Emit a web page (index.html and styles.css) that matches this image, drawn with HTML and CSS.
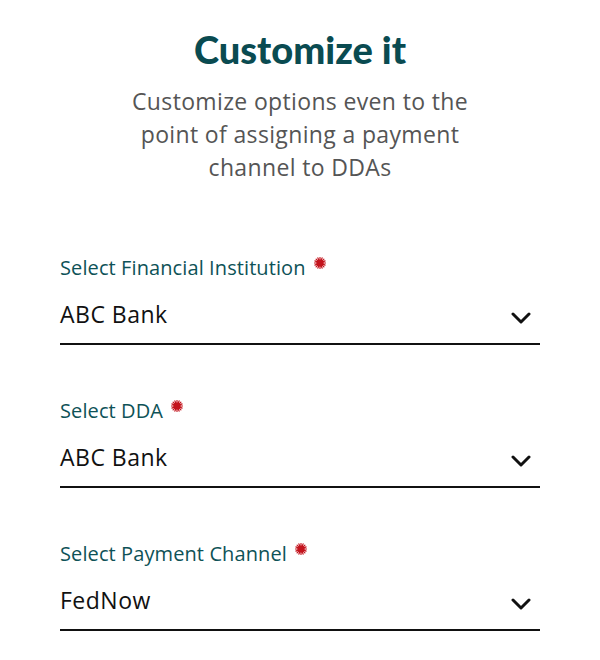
FILE: index.html
```html
<!DOCTYPE html>
<html>
<head>
<meta charset="utf-8">
<link rel="stylesheet" href="styles.css">
</head>
<body>
<main class="page">
  <h1 class="title">Customize it</h1>
  <p class="subtitle">Customize options even to the<br>point of assigning a payment<br>channel to DDAs</p>

  <div class="fields">
    <div class="field">
      <div class="label">Select Financial Institution<svg class="req" width="12" height="12" viewBox="0 0 12 12"><g stroke="#c3141d" stroke-width="1.2" stroke-linecap="round"><path d="M6 0.5V11.5M0.5 6H11.5M2.1 2.1L9.9 9.9M9.9 2.1L2.1 9.9M3.9 0.9L8.1 11.1M8.1 0.9L3.9 11.1M0.9 3.9L11.1 8.1M0.9 8.1L11.1 3.9"/></g><circle cx="6" cy="6" r="3.3" fill="#c3141d"/></svg></div>
      <div class="select">
        <span class="value">ABC Bank</span>
        <svg class="chev" width="20" height="12" viewBox="0 0 20 12"><path d="M2 2 L10 10 L18 2" fill="none" stroke="#111" stroke-width="3" stroke-linecap="round" stroke-linejoin="round"/></svg>
      </div>
    </div>
    <div class="field">
      <div class="label">Select DDA<svg class="req" width="12" height="12" viewBox="0 0 12 12"><g stroke="#c3141d" stroke-width="1.2" stroke-linecap="round"><path d="M6 0.5V11.5M0.5 6H11.5M2.1 2.1L9.9 9.9M9.9 2.1L2.1 9.9M3.9 0.9L8.1 11.1M8.1 0.9L3.9 11.1M0.9 3.9L11.1 8.1M0.9 8.1L11.1 3.9"/></g><circle cx="6" cy="6" r="3.3" fill="#c3141d"/></svg></div>
      <div class="select">
        <span class="value">ABC Bank</span>
        <svg class="chev" width="20" height="12" viewBox="0 0 20 12"><path d="M2 2 L10 10 L18 2" fill="none" stroke="#111" stroke-width="3" stroke-linecap="round" stroke-linejoin="round"/></svg>
      </div>
    </div>
    <div class="field">
      <div class="label">Select Payment Channel<svg class="req" width="12" height="12" viewBox="0 0 12 12"><g stroke="#c3141d" stroke-width="1.2" stroke-linecap="round"><path d="M6 0.5V11.5M0.5 6H11.5M2.1 2.1L9.9 9.9M9.9 2.1L2.1 9.9M3.9 0.9L8.1 11.1M8.1 0.9L3.9 11.1M0.9 3.9L11.1 8.1M0.9 8.1L11.1 3.9"/></g><circle cx="6" cy="6" r="3.3" fill="#c3141d"/></svg></div>
      <div class="select">
        <span class="value">FedNow</span>
        <svg class="chev" width="20" height="12" viewBox="0 0 20 12"><path d="M2 2 L10 10 L18 2" fill="none" stroke="#111" stroke-width="3" stroke-linecap="round" stroke-linejoin="round"/></svg>
      </div>
    </div>
  </div>
</main>
</body>
</html>
```

FILE: styles.css
```css
html, body {
  margin: 0;
  padding: 0;
  background: #ffffff;
}
body {
  font-family: "Open Sans", Lato, sans-serif;
}
.page {
  width: 480px;
  margin: 0 auto;
  padding-top: 25px;
}
.title {
  margin: 0;
  text-align: center;
  font-family: Lato, "Open Sans", sans-serif;
  font-size: 38px;
  font-weight: 900;
  line-height: 48px;
  color: #0a4b51;
}
.subtitle {
  margin: 12px 0 0;
  text-align: center;
  font-size: 23px;
  letter-spacing: 0.35px;
  line-height: 33px;
  color: #555555;
}
.fields {
  margin-top: 71px;
  display: flex;
  flex-direction: column;
  gap: 53px;
}
.field {
  display: flex;
  flex-direction: column;
}
.label {
  display: flex;
  align-items: center;
  font-size: 20px;
  letter-spacing: 0.1px;
  line-height: 26px;
  color: #0e5257;
}
.req {
  margin-left: 8px;
  margin-top: -10px;
}
.select {
  display: flex;
  align-items: center;
  justify-content: space-between;
  padding: 18px 0 14px;
  border-bottom: 2px solid #111111;
}
.value {
  font-size: 23px;
  letter-spacing: 0.5px;
  color: #111111;
  line-height: 30px;
}
.chev {
  margin-right: 9px;
  margin-top: 8px;
}
```
